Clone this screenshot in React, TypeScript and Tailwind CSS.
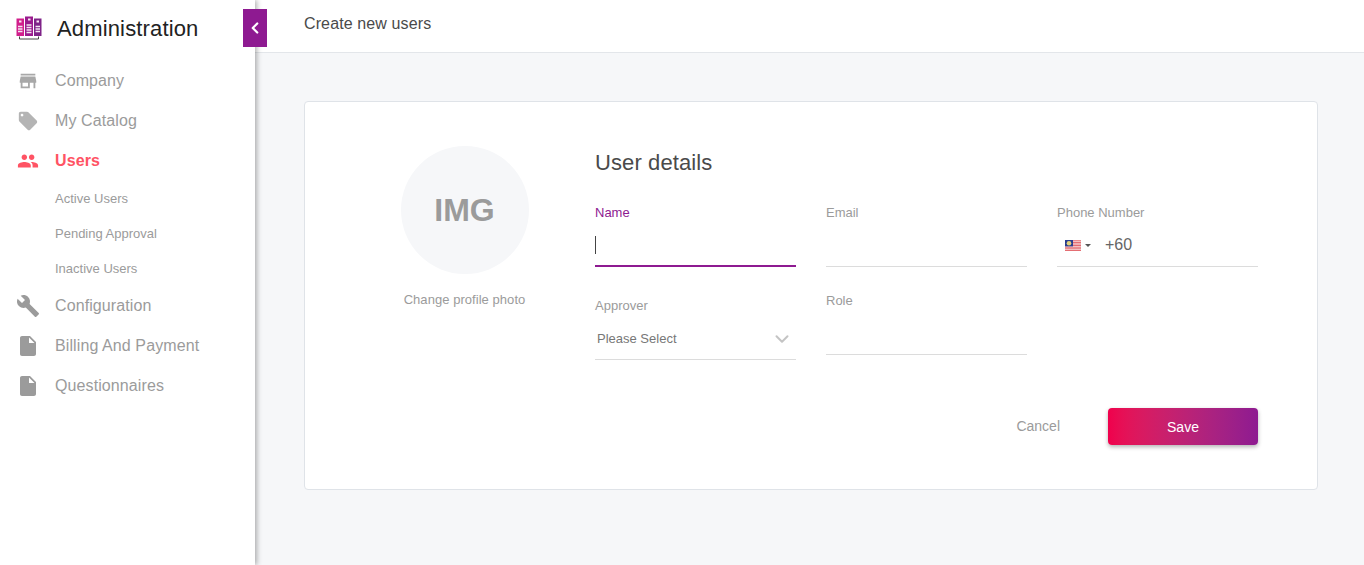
import { ChevronLeft, ChevronDown } from "lucide-react";
import { MdStore, MdLocalOffer, MdPeople, MdBuild, MdInsertDriveFile } from "react-icons/md";

const font = { fontFamily: '"Liberation Sans", Arial, sans-serif' };

function Logo() {
  return (
    <svg width="26" height="24" viewBox="0 0 26 24">
      <rect x="0.500" y="2.500" width="7.500" height="17.500" fill="#d11f8c" />
      <rect x="9" y="0.500" width="8" height="19.500" fill="#9a1b8e" />
      <rect x="18" y="2.500" width="7.500" height="17.500" fill="#7f2388" />
      <path d="M3 5.500h2.500M12 3.500h2.500M20.500 5.500h2.500" stroke="#f7e6f2" strokeWidth="2" />
      <path d="M2 10.500h4.500M2 13h4.500M2 15.500h4.500M10.500 9h5M10.500 11.500h5M10.500 14h5M10.500 16.500h5M19.500 10.500h4.500M19.500 13h4.500M19.500 15.500h4.500" stroke="#f2e6f2" strokeWidth="1.500" />
      <path d="M3.500 20.500v2.500h19v-2.500" fill="none" stroke="#444" strokeWidth="1" />
    </svg>
  );
}

function Flag() {
  return (
    <svg width="16" height="11" viewBox="0 0 16 11">
      <rect width="16" height="11" fill="#fff" />
      <path d="M0 .8h16M0 2.400h16M0 4h16M0 5.600h16M0 7.200h16M0 8.800h16M0 10.400h16" stroke="#dc4a50" strokeWidth="0.900" />
      <rect width="8" height="6.400" fill="#2b3f8f" />
      <circle cx="4" cy="3.200" r="2.300" fill="#e3d27a" />
    </svg>
  );
}

function Field({ label, active, children }: { label: string; active?: boolean; children?: React.ReactNode }) {
  return (
    <div className="w-[201px]">
      <div className={`text-[13px] leading-[14px] ${active ? "text-[#8e1a91]" : "text-[#9b9b9b]"}`}>{label}</div>
      <div className={`mt-[9px] flex h-[38px] items-center pb-1 ${active ? "border-b-2 border-[#8e1a91]" : "border-b border-[#dcdcdc]"}`}>
        {children}
      </div>
    </div>
  );
}

function NavItem({ icon, label, active }: { icon: React.ReactNode; label: string; active?: boolean }) {
  return (
    <div className={`flex h-10 items-center pl-[17px] text-base tracking-[0.1px] ${active ? "font-bold text-[#ff5364]" : "text-[#9b9b9b]"}`}>
      <span className="flex w-[38px] items-center">{icon}</span>
      {label}
    </div>
  );
}

export default function App() {
  return (
    <div className="flex h-[565px] w-[1364px] overflow-hidden bg-[#f6f7f9]" style={font}>
      <aside className="relative z-10 w-[255px] shrink-0 bg-white shadow-[2px_0_5px_rgba(0,0,0,0.3)]">
        <div className="flex h-[61px] items-center pb-[5px] pl-4">
          <Logo />
          <span className="ml-[15px] text-[22px] tracking-[0.15px] text-[#222]">Administration</span>
        </div>
        <div className="absolute left-[243px] top-[9px] flex h-[38px] w-6 items-center justify-center bg-[#8e1a91]">
          <ChevronLeft size={18} strokeWidth={3} className="text-white" />
        </div>
        <nav>
          <NavItem icon={<MdStore size={22} className="text-[#a8a8a8]" />} label="Company" />
          <NavItem icon={<MdLocalOffer size={22} className="text-[#b4b4b4]" />} label="My Catalog" />
          <NavItem icon={<MdPeople size={22} className="text-[#ff5364]" />} label="Users" active />
          <div className="pl-[55px] text-[13px] text-[#9b9b9b]">
            <div className="flex h-[35px] items-center">Active Users</div>
            <div className="flex h-[35px] items-center">Pending Approval</div>
            <div className="flex h-[35px] items-center">Inactive Users</div>
          </div>
          <NavItem icon={<MdBuild size={24} className="-ml-px text-[#9b9b9b]" />} label="Configuration" />
          <NavItem icon={<MdInsertDriveFile size={24} className="-ml-px text-[#9b9b9b]" />} label="Billing And Payment" />
          <NavItem icon={<MdInsertDriveFile size={24} className="-ml-px text-[#9b9b9b]" />} label="Questionnaires" />
        </nav>
      </aside>
      <main className="flex-1">
        <header className="flex h-[53px] items-center border-b border-[#e3e6ea] bg-white pb-[5px] pl-[49px] text-base tracking-[0.12px] text-[#4a4a4a]">
          Create new users
        </header>
        <div className="ml-[49px] mt-12 flex h-[389px] w-[1014px] rounded border border-[#dfe3e8] bg-white">
          <div className="flex w-[290px] shrink-0 flex-col items-center pl-[29px] pt-11">
            <div className="flex h-32 w-32 items-center justify-center rounded-full bg-[#f6f7f9] text-[32px] font-bold text-[#9b9b9b]">IMG</div>
            <div className="mt-4 text-[13px] tracking-[0.05px] text-[#9b9b9b]">Change profile photo</div>
          </div>
          <div className="flex-1 pt-[47px]">
            <h2 className="text-[22px] leading-[28px] tracking-[0.1px] text-[#4a4a4a]">User details</h2>
            <div className="mt-[29px] flex gap-[30px]">
              <Field label="Name" active>
                <span className="h-[18px] w-px bg-[#444]" />
              </Field>
              <Field label="Email" />
              <Field label="Phone Number">
                <span className="ml-2 flex items-center gap-[4px]">
                  <Flag />
                  <span className="h-0 w-0 border-x-[3px] border-t-[3px] border-x-transparent border-t-[#555]" />
                </span>
                <span className="ml-[14px] -mt-px text-base text-[#666]">+60</span>
              </Field>
            </div>
            <div className="mt-8 flex gap-[30px]">
              <Field label="Approver">
                <span className="flex w-full items-center justify-between pl-0.5 pr-[3px] text-[13px] text-[#777]">
                  Please Select
                  <ChevronDown size={22} strokeWidth={2.2} className="text-[#c4c4c4]" />
                </span>
              </Field>
              <div className="-mt-[5px]"><Field label="Role" /></div>
            </div>
            <div className="mt-12 flex w-[663px] items-center justify-end">
              <span className="mr-12 -mt-0.5 text-sm text-[#9b9b9b]">Cancel</span>
              <button className="h-[37px] w-[150px] rounded bg-gradient-to-r from-[#f0004c] to-[#8e1a91] text-sm text-white shadow-[0_2px_4px_rgba(0,0,0,0.3)]">Save</button>
            </div>
          </div>
        </div>
      </main>
    </div>
  );
}
